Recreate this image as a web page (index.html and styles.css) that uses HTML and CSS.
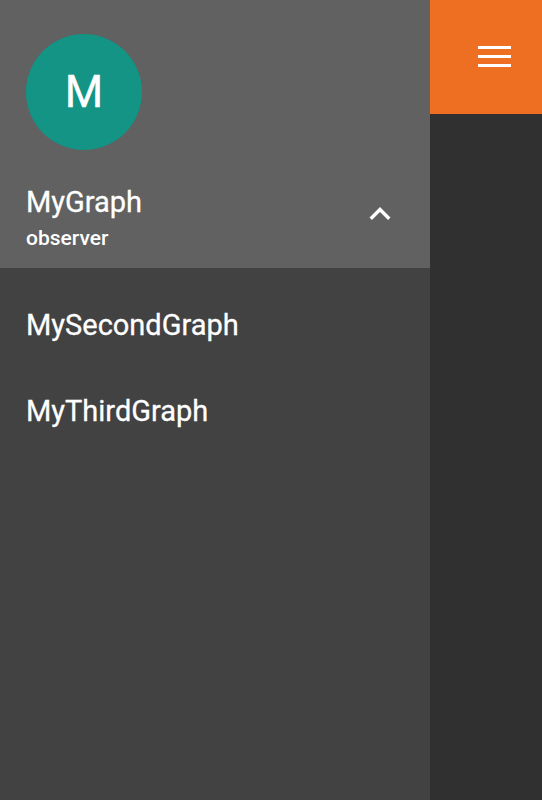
FILE: index.html
```html
<!DOCTYPE html>
<html>
<head>
<meta charset="utf-8">
<link rel="stylesheet" href="styles.css">
</head>
<body>
<div class="app">
  <aside class="drawer">
    <div class="drawer-header">
      <div class="avatar">M</div>
      <div class="account-row">
        <div class="account-text">
          <div class="account-name">MyGraph</div>
          <div class="account-role">observer</div>
        </div>
        <svg class="chevron" viewBox="0 0 24 24" width="42" height="42"><path fill="#fff" d="M12 8l-6 6 1.41 1.41L12 10.83l4.59 4.58L18 14z"/></svg>
      </div>
    </div>
    <nav class="menu">
      <div class="menu-item">MySecondGraph</div>
      <div class="menu-item">MyThirdGraph</div>
    </nav>
  </aside>
  <main class="content">
    <div class="toolbar">
      <svg class="hamburger" width="33" height="21" viewBox="0 0 33 21"><rect x="0" y="0" width="33" height="3" fill="#fff"/><rect x="0" y="9" width="33" height="3" fill="#fff"/><rect x="0" y="18" width="33" height="3" fill="#fff"/></svg>
    </div>
  </main>
</div>
</body>
</html>
```
FILE: styles.css
```css
html, body {
  margin: 0;
  padding: 0;
  height: 100%;
}
body {
  font-family: Roboto, "Liberation Sans", sans-serif;
  color: #fff;
  background: #303030;
}
.app {
  display: flex;
  height: 800px;
}
.drawer {
  width: 430px;
  flex: none;
  display: flex;
  flex-direction: column;
  background: #424242;
}
.drawer-header {
  background: #616161;
  padding: 34px 29px 18px 26px;
  height: 268px;
  box-sizing: border-box;
}
.avatar {
  width: 116px;
  height: 116px;
  border-radius: 50%;
  background: #139484;
  display: flex;
  align-items: center;
  justify-content: center;
  font-size: 44px;
  line-height: 1;
  -webkit-text-stroke: 0.4px #fff;
}
.account-row {
  margin-top: 36px;
  display: flex;
  align-items: center;
  justify-content: space-between;
}
.account-name {
  font-size: 29px;
  line-height: 32px;
  -webkit-text-stroke: 0.3px #fff;
}
.account-role {
  margin-top: 8px;
  font-size: 21px;
  line-height: 24px;
  font-weight: 500;
}
.chevron {
  display: block;
  margin-top: -8px;
}
.menu {
  padding: 14px 0 0 26px;
}
.menu-item {
  font-size: 29px;
  line-height: 32px;
  padding: 27px 0;
  -webkit-text-stroke: 0.3px #fff;
}
.content {
  flex: 1;
  background: #303030;
}
.toolbar {
  height: 114px;
  background: #ee6e22;
  padding: 46px 0 0 48px;
  box-sizing: border-box;
}
.hamburger {
  display: block;
}
```
